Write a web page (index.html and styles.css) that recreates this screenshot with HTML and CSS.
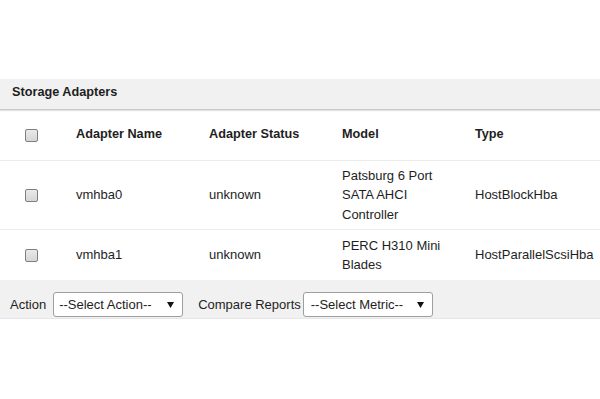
FILE: index.html
```html
<!DOCTYPE html>
<html>
<head>
<meta charset="utf-8">
<link rel="stylesheet" href="styles.css">
</head>
<body>
<div class="panel">
  <div class="panel-title">Storage Adapters</div>
  <div class="row head">
    <div class="cell cb"><span class="check"></span></div>
    <div class="cell">Adapter Name</div>
    <div class="cell">Adapter Status</div>
    <div class="cell">Model</div>
    <div class="cell">Type</div>
  </div>
  <div class="row body r1">
    <div class="cell cb"><span class="check"></span></div>
    <div class="cell">vmhba0</div>
    <div class="cell">unknown</div>
    <div class="cell model">Patsburg 6 Port SATA AHCI Controller</div>
    <div class="cell">HostBlockHba</div>
  </div>
  <div class="row body r2">
    <div class="cell cb"><span class="check"></span></div>
    <div class="cell">vmhba1</div>
    <div class="cell">unknown</div>
    <div class="cell model">PERC H310 Mini Blades</div>
    <div class="cell">HostParallelScsiHba</div>
  </div>
  <div class="footer">
    <span class="label">Action</span>
    <div class="select sel-action"><span>--Select Action--</span><svg width="7" height="7" viewBox="0 0 7 7"><path d="M0 1h7L3.5 7z" fill="#111"/></svg></div>
    <span class="label compare">Compare Reports</span>
    <div class="select sel-metric"><span>--Select Metric--</span><svg width="7" height="7" viewBox="0 0 7 7"><path d="M0 1h7L3.5 7z" fill="#111"/></svg></div>
  </div>
</div>
</body>
</html>
```
FILE: styles.css
```css
html, body {
  margin: 0;
  padding: 0;
  background: #fff;
}
body {
  font-family: "Liberation Sans", Arial, sans-serif;
  font-size: 13px;
  color: #1e1e1e;
}
.panel {
  margin-top: 79px;
}
.panel-title {
  box-sizing: border-box;
  height: 31px;
  line-height: 27px;
  background: #f1f1f1;
  border-bottom: 1px solid #c8c8c8;
  box-shadow: 0 1px 1px #e2e2e2;
  padding-left: 12px;
  font-weight: bold;
  font-size: 12.7px;
}
.row {
  display: grid;
  grid-template-columns: 62px 133px 133px 133px 1fr;
  align-items: center;
  box-sizing: border-box;
  border-bottom: 1px solid #ececec;
}
.row.head {
  height: 51px;
  font-weight: bold;
  font-size: 12.7px;
}
.row.r1 {
  height: 69px;
}
.row.r2 {
  height: 50px;
  border-bottom: none;
}
.cell {
  padding-left: 14px;
  line-height: 19.5px;
}
.cell.cb {
  padding-left: 25px;
  display: flex;
  align-items: center;
}
.cell.model {
  padding-right: 19px;
}
.check {
  display: block;
  width: 13px;
  height: 13px;
  box-sizing: border-box;
  border: 1px solid #7f7f7f;
  border-radius: 2px;
  background: linear-gradient(#e9e9e9, #d6d6d6);
}
.footer {
  height: 39px;
  background: #f1f1f1;
  border-bottom: 1px solid #e6e6e6;
  display: flex;
  align-items: center;
  padding-left: 10px;
  padding-top: 10px;
  box-sizing: border-box;
}
.label {
  margin-right: 7px;
}
.label.compare {
  margin-left: 15px;
  margin-right: 2px;
}
.select {
  width: 130px;
  height: 25px;
  box-sizing: border-box;
  border: 1px solid #9e9e9e;
  border-radius: 3px;
  background: #fff;
  display: flex;
  align-items: center;
  justify-content: space-between;
  padding: 0 8px 0 5px;
  font-size: 13px;
}
.sel-metric {
  padding-left: 7px;
}
.select svg {
  display: block;
}
```
